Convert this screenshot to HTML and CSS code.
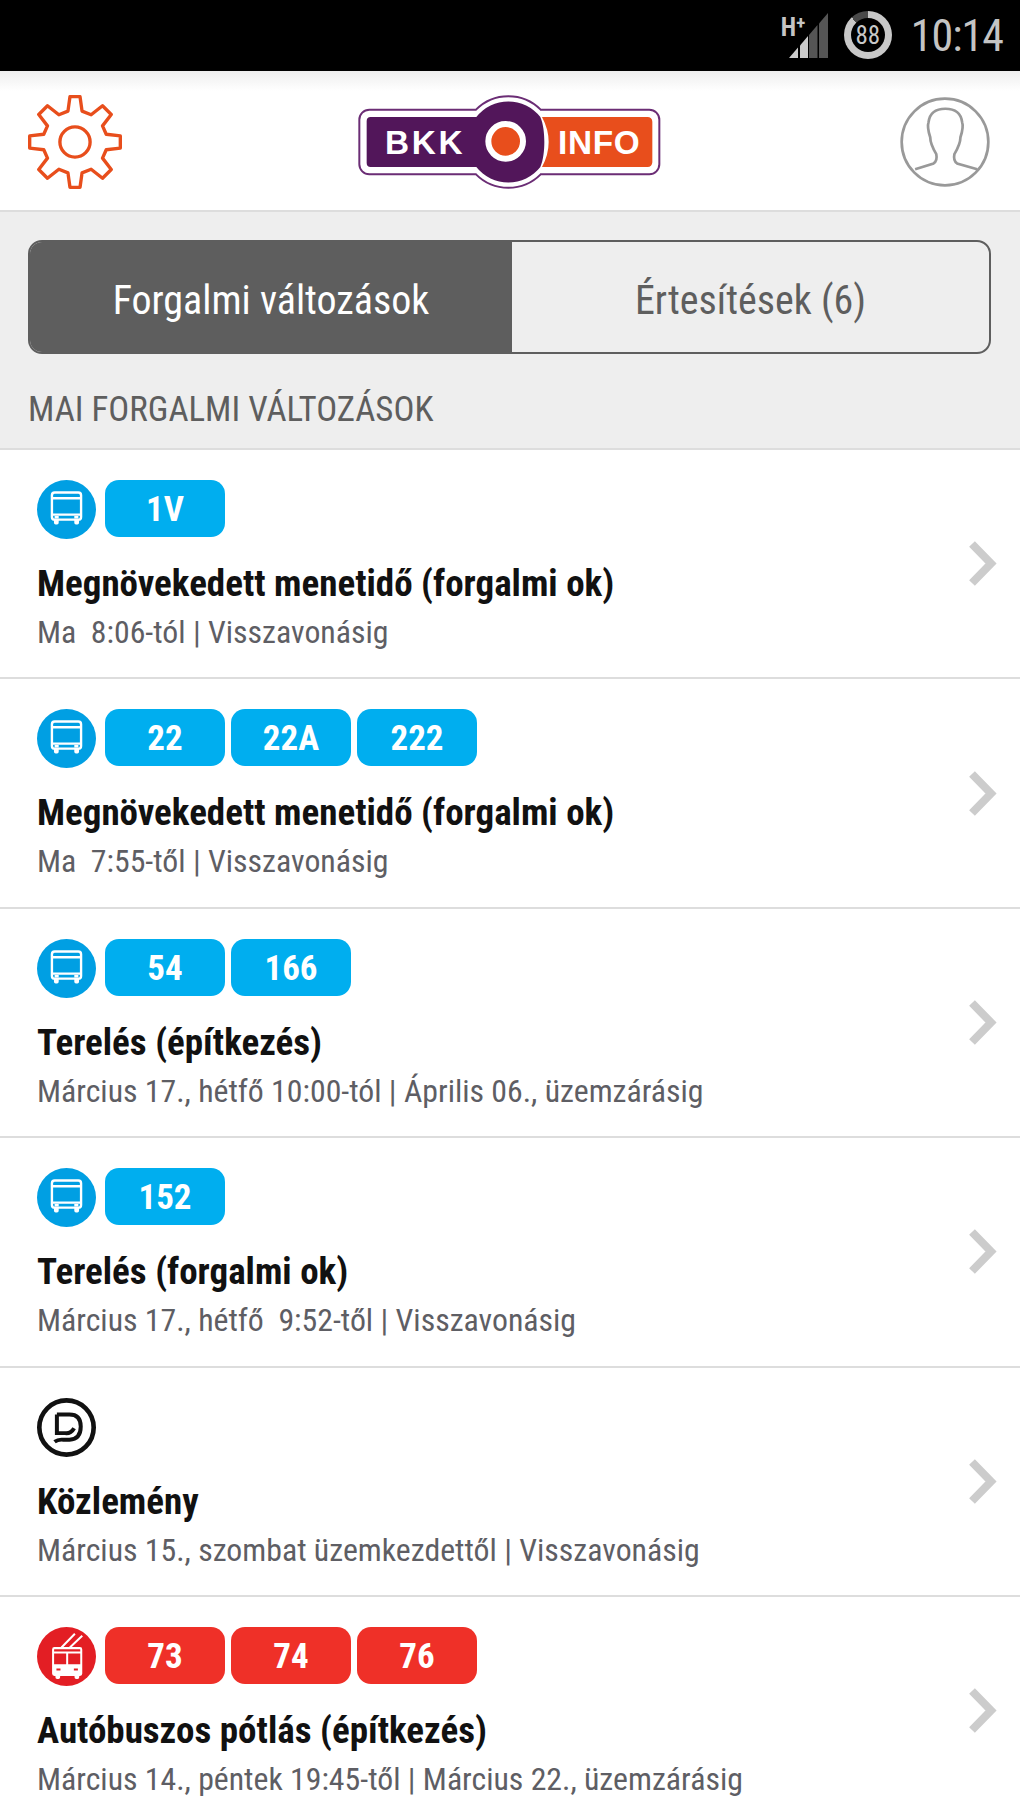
FILE: index.html
```html
<!DOCTYPE html>
<html lang="hu">
<head>
<meta charset="utf-8">
<title>BKK Info</title>
<link rel="stylesheet" href="styles.css">
</head>
<body>
<svg class="defs" width="0" height="0" aria-hidden="true">
  <symbol id="bus" viewBox="24 16 174 174">
    <circle cx="111" cy="103" r="87" fill="#009fe3"/>
    <g fill="none" stroke="#fff" stroke-width="7">
      <rect x="68" y="53" width="86" height="80" rx="8"/>
      <path d="M68 70h86M68 118h86M76 126h12M134 126h12"/>
    </g>
    <path d="M74 133h14v9a5 5 0 0 1-5 5h-4a5 5 0 0 1-5-5zM134 133h14v9a5 5 0 0 1-5 5h-4a5 5 0 0 1-5-5z" fill="#fff"/>
  </symbol>
  <symbol id="trolley" viewBox="52 52 176 176">
    <circle cx="140" cy="140" r="88" fill="#e31e24"/>
    <path d="M125 113L165 72M150 113L187 78" fill="none" stroke="#fff" stroke-width="6"/>
    <rect x="100" y="115" width="84" height="80" rx="4" fill="none" stroke="#fff" stroke-width="6"/>
    <path d="M100 128h84M100 166h84M142 128v38" fill="none" stroke="#fff" stroke-width="6"/>
    <path d="M100 166h84v28h-84z" fill="#fff"/>
    <path d="M110 176h12v6h-12zM162 176h12v6h-12z" fill="#e31e24"/>
    <path d="M107 195h14v7a5 5 0 0 1-5 5h-4a5 5 0 0 1-5-5zM164 195h14v7a5 5 0 0 1-5 5h-4a5 5 0 0 1-5-5z" fill="#fff"/>
  </symbol>
  <symbol id="chev" viewBox="0 0 32 47">
    <path d="M5 4L24 23.500L5 43" fill="none" stroke="#ccc" stroke-width="8"/>
  </symbol>
</svg>

<div class="status">
  <div class="signal-wrap">
    <span class="net">H<sup>+</sup></span>
    <svg class="signal" width="39" height="45" viewBox="0 0 39 45">
      <path d="M30 10.500L39 0v45h-9z" fill="#555"/>
      <path d="M20 22L28.500 12v33H20z" fill="#555"/>
      <path d="M11 32.500L19 23v22h-8z" fill="#ccc"/>
      <path d="M0 45L9 34.500V45z" fill="#ccc"/>
    </svg>
  </div>
  <span class="battery"><span class="battery-in">88</span></span>
  <span class="clock">10:14</span>
</div>

<header class="top">
  <svg class="gear" width="94" height="94" viewBox="85 75 280 280">
    <path d="M210 80H240L246 123L273 134L307 107L333 133L307 167L318 192L360 197V233L318 238L307 263L333 297L307 323L273 296L246 307L240 350H210L204 307L177 296L143 323L117 297L143 263L132 238L90 233V197L132 192L143 167L117 133L143 107L177 134L204 123z" fill="none" stroke="#e84e1c" stroke-width="10" stroke-linejoin="round"/>
    <circle cx="225" cy="215" r="45" fill="none" stroke="#e84e1c" stroke-width="10"/>
  </svg>
  <svg class="logo" width="310" height="100" viewBox="42 35 930 300">
    <path class="logo-edge" d="M88 88H408A137 137 0 0 1 602 88H928a30 30 0 0 1 30 30V252a30 30 0 0 1-30 30H602A137 137 0 0 1 408 282H88a30 30 0 0 1-30-30V118a30 30 0 0 1 30-30z"/>
    <path class="logo-purple" d="M92 110H409A122 122 0 0 1 601 110C610 130 613 160 613 185S610 240 601 260A122 122 0 0 1 409 260H92a12 12 0 0 1-12-12V122a12 12 0 0 1 12-12z"/>
    <path class="logo-orange" d="M606 110H923a14 14 0 0 1 14 14V246a14 14 0 0 1-14 14H606Q646 185 606 110z"/>
    <circle class="logo-dot" cx="497" cy="183" r="52"/>
    <text class="logo-text" x="135" y="222" letter-spacing="8">BKK</text>
    <text class="logo-text" x="654" y="222" letter-spacing="2">INFO</text>
  </svg>
  <svg class="user" width="90" height="90" viewBox="600 290 268 268">
    <circle cx="734" cy="424" r="129" fill="none" stroke="#999" stroke-width="8"/>
    <path d="M645 505L700 488Q712 480 708 460Q690 430 690 410Q680 380 685 365Q690 325 735 325Q780 325 785 365Q790 380 780 410Q780 430 762 460Q758 480 770 488L830 505" fill="none" stroke="#999" stroke-width="8"/>
  </svg>
</header>

<main class="content">
  <div class="tabs">
    <div class="tab tab-on"><span>Forgalmi változások</span></div>
    <div class="tab"><span>Értesítések (6)</span></div>
  </div>
  <h2 class="section">MAI FORGALMI VÁLTOZÁSOK</h2>

  <ul class="list">
    <li class="row">
      <div class="row-main">
        <div class="badges"><svg class="mode"><use href="#bus"/></svg><b>1V</b></div>
        <h3>Megnövekedett menetidő (forgalmi ok)</h3>
        <p>Ma&nbsp; 8:06-tól | Visszavonásig</p>
      </div>
      <svg class="chev"><use href="#chev"/></svg>
    </li>
    <li class="row">
      <div class="row-main">
        <div class="badges"><svg class="mode"><use href="#bus"/></svg><b>22</b><b>22A</b><b>222</b></div>
        <h3>Megnövekedett menetidő (forgalmi ok)</h3>
        <p>Ma&nbsp; 7:55-től | Visszavonásig</p>
      </div>
      <svg class="chev"><use href="#chev"/></svg>
    </li>
    <li class="row">
      <div class="row-main">
        <div class="badges"><svg class="mode"><use href="#bus"/></svg><b>54</b><b>166</b></div>
        <h3>Terelés (építkezés)</h3>
        <p>Március 17., hétfő 10:00-tól | Április 06., üzemzárásig</p>
      </div>
      <svg class="chev"><use href="#chev"/></svg>
    </li>
    <li class="row">
      <div class="row-main">
        <div class="badges"><svg class="mode"><use href="#bus"/></svg><b>152</b></div>
        <h3>Terelés (forgalmi ok)</h3>
        <p>Március 17., hétfő&nbsp; 9:52-től | Visszavonásig</p>
      </div>
      <svg class="chev"><use href="#chev"/></svg>
    </li>
    <li class="row">
      <div class="row-main">
        <div class="badges">
          <svg class="mode" viewBox="50 54 178 178">
            <circle cx="139" cy="143" r="82" fill="none" stroke="#111" stroke-width="14"/>
            <path d="M110 104H148Q182 104 182 140Q182 178 148 180H130Q114 178 103 186" fill="none" stroke="#111" stroke-width="12"/>
            <path d="M110 104V160H135Q152 162 162 145" fill="none" stroke="#111" stroke-width="12"/>
          </svg>
        </div>
        <h3>Közlemény</h3>
        <p>Március 15., szombat üzemkezdettől | Visszavonásig</p>
      </div>
      <svg class="chev"><use href="#chev"/></svg>
    </li>
    <li class="row">
      <div class="row-main">
        <div class="badges red"><svg class="mode"><use href="#trolley"/></svg><b>73</b><b>74</b><b>76</b></div>
        <h3>Autóbuszos pótlás (építkezés)</h3>
        <p>Március 14., péntek 19:45-től | Március 22., üzemzárásig</p>
      </div>
      <svg class="chev"><use href="#chev"/></svg>
    </li>
  </ul>
</main>
</body>
</html>
```
FILE: styles.css
```css
* { box-sizing: border-box; }
html, body { margin: 0; padding: 0; }
body {
  width: 1020px;
  height: 1813px;
  overflow: hidden;
  background: #fff;
  font-family: "Roboto Condensed", Roboto, "Liberation Sans", sans-serif;
  font-stretch: condensed;
}
.defs { position: absolute; }

.status {
  height: 71px;
  background: #000;
  display: flex;
  align-items: center;
  justify-content: flex-end;
  padding-right: 17px;
  color: #c4c4c4;
}
.signal-wrap { position: relative; width: 39px; height: 45px; margin-top: -1px; margin-right: 16px; }
.signal { display: block; }
.net {
  position: absolute;
  left: -8px;
  top: 2px;
  font-size: 25px;
  line-height: 25px;
  font-weight: 700;
}
.net sup { font-size: 19px; line-height: 0; vertical-align: 7px; }
.battery {
  width: 48px;
  height: 48px;
  border-radius: 50%;
  background: conic-gradient(#c8c8c8 0 88%, #4a4a4a 88% 100%);
  display: flex;
  align-items: center;
  justify-content: center;
  margin-right: 19px;
  margin-top: -1px;
}
.battery-in {
  width: 34px;
  height: 34px;
  border-radius: 50%;
  background: #000;
  color: #c8c8c8;
  font-size: 25px;
  display: flex;
  align-items: center;
  justify-content: center;
}
.clock { font-size: 44px; font-weight: 400; margin-top: 1px; letter-spacing: -1px; }

.top {
  height: 141px;
  background: linear-gradient(#eee, #fff 20px);
  border-bottom: 2px solid #ddd;
  display: flex;
  align-items: center;
  justify-content: space-between;
  padding: 2px 30px 0 28px;
}
.logo { margin-left: -4px; }
.logo-edge { fill: #fff; stroke: #6b2d75; stroke-width: 6; }
.logo-purple { fill: #52165a; }
.logo-orange { fill: #e84e1c; }
.logo-dot { fill: #e84e1c; stroke: #fff; stroke-width: 18; }
.logo-text {
  font-family: "Liberation Sans", sans-serif;
  font-stretch: normal;
  font-size: 100px;
  font-weight: 700;
  fill: #fff;
}

.content { background: #eee; padding-top: 28px; }
.tabs {
  margin: 0 29px 0 28px;
  height: 114px;
  border: 2px solid #5e5e5e;
  border-radius: 14px;
  background: #eee;
  display: flex;
  overflow: hidden;
}
.tab {
  flex: 1;
  display: flex;
  align-items: center;
  justify-content: center;
  padding-top: 7px;
  font-size: 40px;
  color: #5e5e5e;
}
.tab-on { flex: 0 0 482px; background: #5e5e5e; color: #fff; }
.section {
  margin: 0;
  padding: 36px 28px 0;
  height: 94px;
  font-size: 34.9px;
  font-weight: 400;
  color: #5e5e5e;
  line-height: 40px;
}
.list { list-style: none; margin: 0; padding: 0; background: #fff; }
.row {
  height: 229.4px;
  border-top: 2px solid #ddd;
  display: flex;
  align-items: center;
  justify-content: space-between;
  padding: 0 21px 0 37px;
}
.row-main { min-width: 0; align-self: flex-start; padding-top: 30px; }
.badges { display: flex; gap: 6px; height: 60px; margin-bottom: 20px; }
.mode { width: 59px; height: 59px; margin-right: 3px; }
.badges b {
  width: 120px;
  height: 57px;
  padding-top: 1px;
  border-radius: 14px;
  background: #00aeef;
  color: #fff;
  font-size: 35px;
  line-height: 57px;
  text-align: center;
}
.red b { background: #ef3028; }
h3 { margin: 0; font-size: 37px; font-weight: 700; line-height: 48px; color: #111; }
p { margin: 2px 0 0; font-size: 31.8px; line-height: 44px; color: #5e5e64; }
.chev { width: 32px; height: 47px; flex: none; }
```
